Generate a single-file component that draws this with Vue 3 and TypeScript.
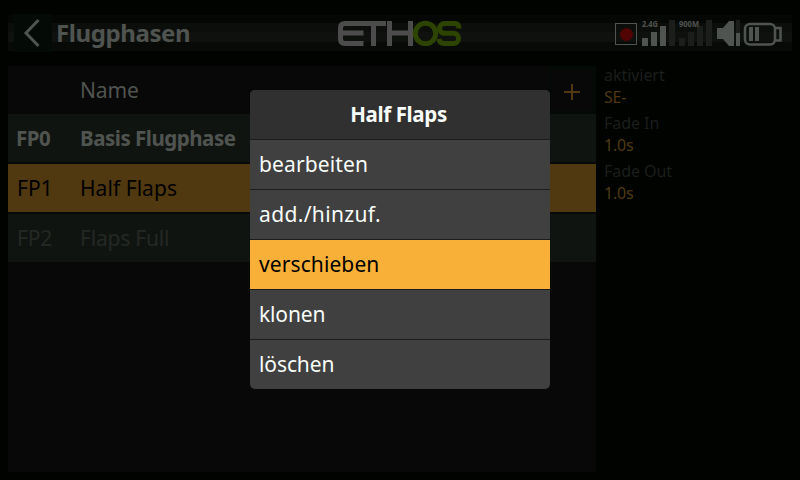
<script setup lang="ts">
interface Phase { id: string; name: string; kind: string }
interface Field { label: string; value: string }
interface Action { text: string; spacing: number; active?: boolean }

const phases: Phase[] = [
  { id: 'FP0', name: 'Basis Flugphase', kind: 'base' },
  { id: 'FP1', name: 'Half Flaps', kind: 'selected' },
  { id: 'FP2', name: 'Flaps Full', kind: 'inactive' },
]
const fields: Field[] = [
  { label: 'aktiviert', value: 'SE-' },
  { label: 'Fade In', value: '1.0s' },
  { label: 'Fade Out', value: '1.0s' },
]
const actions: Action[] = [
  { text: 'bearbeiten', spacing: 0.12 },
  { text: 'add./hinzuf.', spacing: 0.35 },
  { text: 'verschieben', spacing: 0.1, active: true },
  { text: 'klonen', spacing: -0.15 },
  { text: 'löschen', spacing: -0.1 },
]
</script>

<template>
  <div class="screen">
    <header class="topbar">
      <button class="back" aria-label="Zurück">
        <svg width="38" height="38" viewBox="0 0 38 38"><path d="M24.500 6 12 19l12.500 13" /></svg>
      </button>
      <h1>Flugphasen</h1>
      <svg class="logo" width="124" height="26" viewBox="0 0 124 26">
        <g class="grey">
          <path d="M48 3.500H7Q2.500 3.500 2.500 8V19Q2.500 23.500 7 23.500H25.500M3 13H25.500M35.500 3V26M51.500 1V26M52 13H74M72.500 1V26" />
        </g>
        <g class="green">
          <circle cx="87.500" cy="13.500" r="10.200" />
          <path d="M121 8.500Q121 3.500 117 3.500H106.500A4.900 4.900 0 0 0 106.500 13.300H115.500A5.100 5.100 0 0 1 115.500 23.500H106Q101.500 23.500 101 19" />
        </g>
      </svg>
      <svg class="status" width="170" height="30" viewBox="0 0 170 30">
        <rect x="1.500" y="4.500" width="21" height="21" class="recbox" />
        <circle cx="12.500" cy="15.500" r="6.500" class="rec" />
        <g class="off">
          <rect x="55" y="1" width="6" height="26" /><rect x="65" y="19" width="6" height="8" />
          <rect x="74" y="13" width="6" height="14" /><rect x="83" y="7" width="6" height="20" />
          <rect x="92" y="1" width="6" height="26" /><rect x="122" y="1" width="4" height="13" />
        </g>
        <g class="on">
          <rect x="28" y="19" width="6" height="8" /><rect x="37" y="13" width="6" height="14" />
          <rect x="46" y="7" width="6" height="20" />
          <path d="M103 9h6l6-7h5v25h-5l-6-7h-6z" /><rect x="122" y="14" width="4" height="13" />
          <rect x="135" y="8" width="4" height="14" /><rect x="141" y="8" width="4" height="14" />
        </g>
        <rect x="131" y="5" width="30" height="20.500" rx="5" class="battery" />
        <path d="M162 9h4.500v12.500h-4.500" class="battery" />
        <text x="28" y="7.500" textLength="16" lengthAdjust="spacingAndGlyphs">2.4G</text>
        <text x="65" y="7.500" textLength="20" lengthAdjust="spacingAndGlyphs">900M</text>
      </svg>
    </header>

    <main>
      <section class="table">
        <div class="head">
          <span class="title">Name</span>
          <button class="add" aria-label="Neu"><svg width="16" height="16"><path d="M8 0V16M0 8H16" /></svg></button>
        </div>
        <div v-for="p in phases" :key="p.id" class="row" :class="p.kind">
          <span class="id">{{ p.id }}</span><span>{{ p.name }}</span>
        </div>
      </section>
      <aside>
        <div v-for="f in fields" :key="f.label" class="field">
          <div class="label">{{ f.label }}</div>
          <div class="value">{{ f.value }}</div>
        </div>
      </aside>
    </main>

    <div class="popup">
      <h2>Half Flaps</h2>
      <div v-for="a in actions" :key="a.text" class="action" :class="{ active: a.active }">
        <span :style="{ letterSpacing: a.spacing + 'px' }">{{ a.text }}</span>
      </div>
    </div>
  </div>
</template>

<style>
body { background: #000300; overflow: hidden; }
</style>

<style scoped>
* { box-sizing: border-box; margin: 0; }
.screen {
  position: relative; width: 800px; height: 480px; padding: 15px 8px 8px;
  background: #000300; color: #505450;
  font: 21px "Noto Sans", sans-serif; overflow: hidden;
}
button { border: 0; padding: 0; font: inherit; color: inherit; }
svg { display: block; fill: none; }
.topbar {
  display: flex; height: 36px; align-items: flex-start;
  background: linear-gradient(#050705 0 8px, #0c0e0c 8px 17px, #0f110f 17px 27px, #080a08 27px);
}
.back { flex: none; width: 38px; height: 38px; margin: -1px 0 0 6px; background: #040a06; }
.back path { stroke: #505450; stroke-width: 3; }
h1 { flex: none; width: 280px; padding-left: 4px; font-size: 24px; line-height: 36px; letter-spacing: -0.4px; white-space: nowrap; }
.logo { flex: none; margin: 5px 0 0 6px; }
.logo path, .logo circle { stroke-width: 5; }
.grey { stroke: #4c4c4c; }
.green { stroke: #2c4400; }
.status { margin: 4px 0 0 152px; flex: none; }
.recbox { stroke: #505450; }
.rec { fill: #500404; }
.on { fill: #505450; }
.off { fill: #1c1e1c; }
.battery { stroke: #505450; stroke-width: 2.5; }
.status text { fill: #505450; font: bold 8.5px "Noto Sans", sans-serif; }
main { display: flex; height: 406px; margin-top: 15px; }
.table { display: flex; flex-direction: column; gap: 2px; width: 588px; background: #080808; }
.head { display: flex; align-items: center; justify-content: space-between; height: 48px; margin-bottom: -2px; padding-left: 72px; }
.title { letter-spacing: -0.1px; }
.add { display: grid; place-items: center; width: 48px; height: 48px; padding-top: 4px; background: #080808; border: 3px solid #040a06; }
.add path { stroke: #503810; stroke-width: 2; }
.row { display: flex; align-items: center; height: 48px; padding: 0 0 0 9px; background: #101410; letter-spacing: 0.05px; }
.id { width: 63px; }
.base { padding-left: 8px; font-size: 20.5px; font-weight: 700; letter-spacing: -0.48px; }
.base .id { width: 64px; }
.selected { background: #503810; color: #000; }
.inactive { color: #242824; letter-spacing: -0.2px; }
aside { flex: 1; margin-top: -1px; padding-left: 8px; font-size: 16px; letter-spacing: -0.05px; }
.field { height: 48px; }
.label { line-height: 20px; color: #1c1e1c; }
.value { line-height: 24px; color: #503810; letter-spacing: -0.2px; }
.popup { position: absolute; left: 250px; top: 90px; width: 300px; border-radius: 5px; overflow: hidden; background: #404040; color: #f8fcf8; }
h2 { height: 49px; padding-right: 3px; background: #303030; font-size: 20.5px; line-height: 48px; letter-spacing: -0.35px; text-align: center; }
.action { height: 50px; padding-left: 9px; border-top: 1px solid #1c1c1c; line-height: 48px; }
.active { background: #f8b038; color: #000; }
</style>
